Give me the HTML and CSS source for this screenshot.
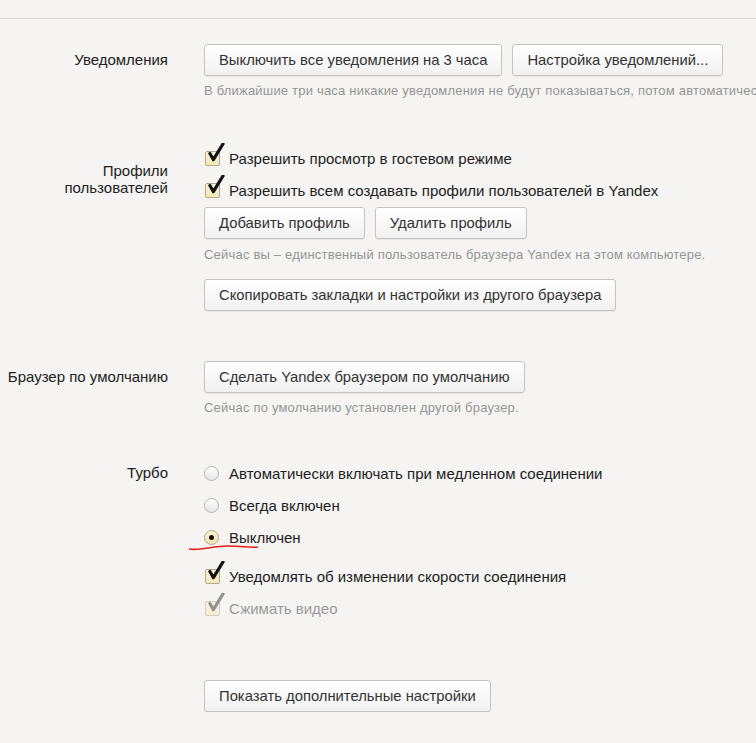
FILE: index.html
```html
<!DOCTYPE html>
<html lang="ru">
<head>
    <meta charset="UTF-8">
    <link rel="stylesheet" href="styles.css">
    <title>Настройки</title>
</head>
<body>
    <div class="topline"></div>

    <!-- Уведомления -->
    <div class="section s-notify">
        <div class="label label-btn">Уведомления</div>
        <div class="controls">
            <div class="btnrow">
                <button class="btn">Выключить все уведомления на 3 часа</button>
                <button class="btn">Настройка уведомлений...</button>
            </div>
            <p class="hint">В ближайшие три часа никакие уведомления не будут показываться, потом автоматически включатся снова.</p>
        </div>
    </div>

    <!-- Профили -->
    <div class="section s-profiles">
        <div class="label label-profiles">Профили<br>пользователей</div>
        <div class="controls">
            <label class="row"><span class="check on"><svg viewBox="0 0 20 24"><path d="M3 12 L7 19 L18 1"/></svg></span>Разрешить просмотр в гостевом режиме</label>
            <label class="row"><span class="check on"><svg viewBox="0 0 20 24"><path d="M3 12 L7 19 L18 1"/></svg></span>Разрешить всем создавать профили пользователей в Yandex</label>
            <div class="btnrow btnrow-tight">
                <button class="btn">Добавить профиль</button>
                <button class="btn">Удалить профиль</button>
            </div>
            <p class="hint">Сейчас вы – единственный пользователь браузера Yandex на этом компьютере.</p>
            <button class="btn btn-copy">Скопировать закладки и настройки из другого браузера</button>
        </div>
    </div>

    <!-- Браузер по умолчанию -->
    <div class="section s-default">
        <div class="label label-btn">Браузер по умолчанию</div>
        <div class="controls">
            <button class="btn">Сделать Yandex браузером по умолчанию</button>
            <p class="hint">Сейчас по умолчанию установлен другой браузер.</p>
        </div>
    </div>

    <!-- Турбо -->
    <div class="section s-turbo">
        <div class="label label-btn">Турбо</div>
        <div class="controls">
            <label class="row"><span class="radio"></span>Автоматически включать при медленном соединении</label>
            <label class="row"><span class="radio"></span>Всегда включен</label>
            <label class="row"><span class="radio on"></span>Выключен</label>
            <label class="row row-gap"><span class="check on"><svg viewBox="0 0 20 24"><path d="M3 12 L7 19 L18 1"/></svg></span>Уведомлять об изменении скорости соединения</label>
            <label class="row disabled"><span class="check on"><svg viewBox="0 0 20 24"><path d="M3 12 L7 19 L18 1"/></svg></span>Сжимать видео</label>
        </div>
    </div>

    <div class="section s-more">
        <div></div>
        <div class="controls">
            <button class="btn">Показать дополнительные настройки</button>
        </div>
    </div>

    <!-- красная пометка -->
    <svg class="mark" viewBox="0 0 72 10"><path d="M1 6 C 12 8, 24 3, 40 3 S 60 5, 70 4"/></svg>
</body>
</html>
```

FILE: styles.css
```css
body {
    margin: 0;
    background-color: #f5f4f2;
    font-family: "Liberation Sans", Arial, sans-serif;
    font-size: 15px;
    color: #222;
    position: relative;
    overflow: hidden;
}

.topline {
    height: 18px;
    border-bottom: 1px solid #dedddb;
}

.section {
    display: grid;
    grid-template-columns: 168px 1fr;
    column-gap: 36px;
}

.label {
    text-align: right;
    color: #222;
    white-space: nowrap;
}

.label-btn {
    line-height: 32px;
}

.label-profiles {
    line-height: 17px;
    padding-top: 20px;
}

.controls {
    min-width: 0;
    white-space: nowrap;
}

.s-notify {
    margin-top: 25px;
}

.s-profiles {
    margin-top: 43px;
}

.s-default {
    margin-top: 50px;
}

.s-turbo {
    margin-top: 41px;
}

.s-more {
    margin-top: 56px;
}

.btnrow {
    display: flex;
    gap: 10px;
}

.btnrow-tight {
    margin-top: 1px;
}

.btn {
    height: 32px;
    padding: 0 14px;
    font-family: inherit;
    font-size: 14.8px;
    color: #333;
    background: linear-gradient(#ffffff, #f1f1f1);
    border: 1px solid #c4c4c4;
    border-radius: 3px;
    box-shadow: 0 1px 1px rgba(0, 0, 0, 0.06);
}

.btn-copy {
    margin-top: 16px;
}

.hint {
    margin: 7px 0 0 0;
    font-size: 13px;
    letter-spacing: 0.2px;
    line-height: 16px;
    color: #959595;
    overflow: hidden;
}

.s-profiles .hint {
    margin-top: 8px;
}

.row {
    display: flex;
    align-items: center;
    height: 32px;
}

.row-gap {
    margin-top: 7px;
}

.disabled {
    color: #9a9a9a;
}

.check {
    position: relative;
    flex: none;
    width: 13px;
    height: 13px;
    margin: 0 9px 0 1px;
    border: 1px solid #b5ab8c;
    border-radius: 2px;
    background: linear-gradient(#fbf3d3, #f3e7b8);
}

.check svg {
    position: absolute;
    left: 1px;
    top: -9px;
    width: 18px;
    height: 21px;
    fill: none;
    stroke: #111;
    stroke-width: 3.6;
    stroke-linecap: round;
    stroke-linejoin: round;
}

.disabled .check {
    opacity: 0.5;
}

.disabled .check svg {
    stroke: #333;
}

.radio {
    flex: none;
    width: 13px;
    height: 13px;
    margin: 0 10px 0 0;
    border: 1px solid #b3b3b3;
    border-radius: 50%;
    background: linear-gradient(#ffffff, #e6e6e6);
    position: relative;
}

.radio.on {
    border-color: #b1a78a;
    background: linear-gradient(#fbf3d3, #f1e4b2);
}

.radio.on::after {
    content: "";
    position: absolute;
    left: 4px;
    top: 4px;
    width: 5px;
    height: 5px;
    border-radius: 50%;
    background: #111;
}

.mark {
    position: absolute;
    left: 188px;
    top: 543px;
    width: 72px;
    height: 10px;
    fill: none;
    stroke: #e8201c;
    stroke-width: 1.6;
}
```
